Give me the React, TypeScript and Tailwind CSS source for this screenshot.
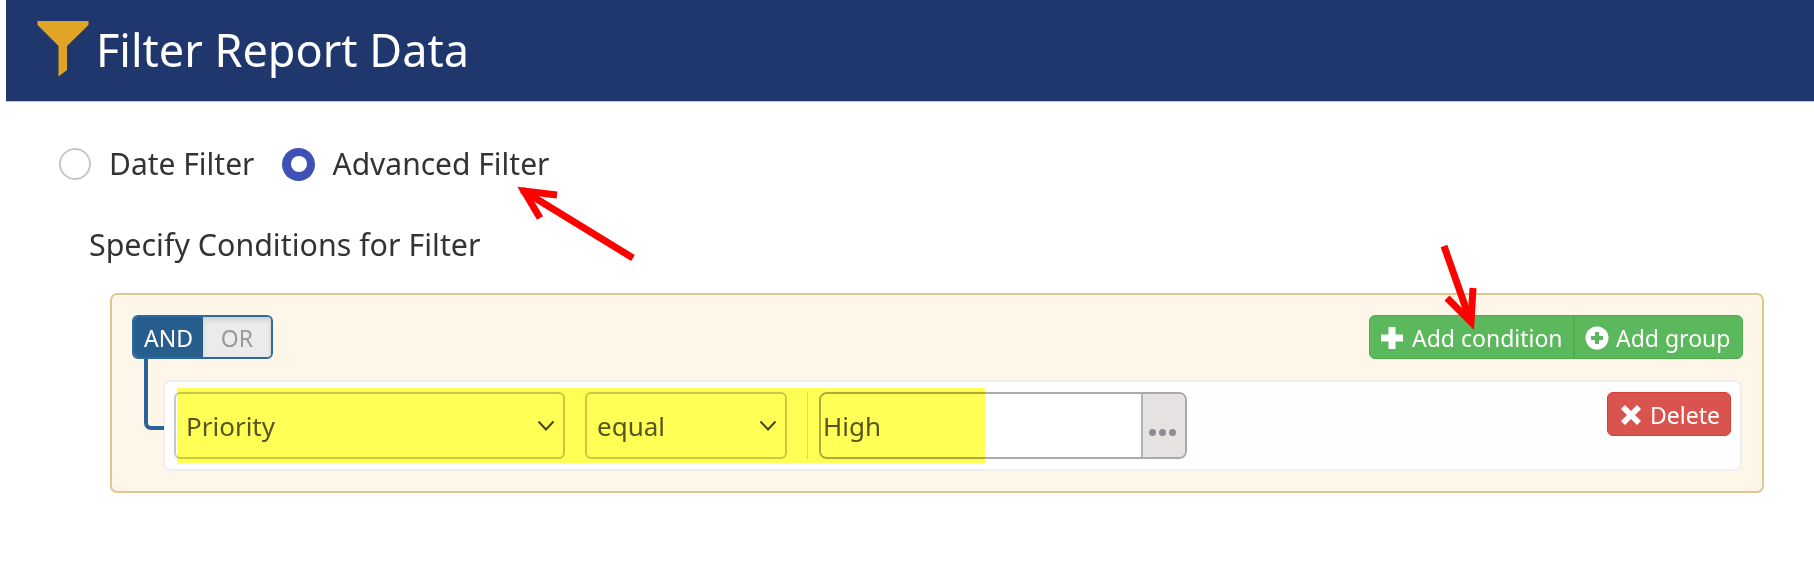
const sans = "font-['Noto_Sans',sans-serif]";

function ChevronDown() {
  return (
    <svg width="18" height="12" viewBox="0 0 18 12" fill="none" className="absolute right-[8px] top-[26px]">
      <path d="M1.5 1.5 9 9.500l7.500-8" stroke="#444" strokeWidth="2" />
    </svg>
  );
}

function PlusIcon() {
  return (
    <svg width="24" height="24" viewBox="0 0 24 24" className="mr-[8px] shrink-0">
      <path d="M8.500 1h7v7.500H23v7h-7.500V23h-7v-7.500H1v-7h7.500z" fill="#fff" />
    </svg>
  );
}

function PlusCircleIcon() {
  return (
    <svg width="24" height="24" viewBox="0 0 24 24" className="mr-[7px] shrink-0">
      <circle cx="12" cy="12" r="11.500" fill="#fff" />
      <path d="M10 6h4v4h4v4h-4v4h-4v-4H6v-4h4z" fill="#5cb85c" />
    </svg>
  );
}

function RemoveIcon() {
  return (
    <svg width="22" height="22" viewBox="0 0 22 22" className="mr-[8px] shrink-0">
      <path d="M5 1l6 6 6-6 4 4-6 6 6 6-4 4-6-6-6 6-4-4 6-6-6-6z" fill="#fff" />
    </svg>
  );
}

function SelectBox({ label, className }: { label: string; className: string }) {
  return (
    <div className={`relative flex h-[67px] items-center rounded-[6px] border-2 border-[#c8c8c8] bg-white pl-[10px] pt-[2px] text-[26px] text-[#555] ${className}`}>
      {label}
      <ChevronDown />
    </div>
  );
}

export default function App() {
  return (
    <div className={`relative h-[572px] w-[1814px] overflow-hidden bg-white ${sans}`}>
      <header className="ml-[6px] flex h-[102px] items-center border-b border-[#b9c4d4] bg-[#20376e] pl-[31px]">
        <svg width="52" height="56" viewBox="0 0 52 56" className="mb-[5px] mt-[1px] shrink-0">
          <path d="M0.500 0h51v4L30 25v24l-8.500 6.500V25L0.500 4z" fill="#e0a526" />
        </svg>
        <h1 className="mb-[2px] ml-[7px] text-[45px] leading-none text-white">Filter Report Data</h1>
      </header>

      <div className="mt-[46px] flex h-[32px] items-center pl-[59px] text-[30px] text-[#333]">
        <span className="size-[32px] rounded-full border-2 border-[#c8c8c8] bg-white" />
        <span className="mb-[2px] ml-[18px]">Date Filter</span>
        <span className="ml-[28px] flex size-[33px] items-center justify-center rounded-full bg-[#3f51b5]">
          <span className="size-[16px] rounded-full bg-white" />
        </span>
        <span className="mb-[2px] ml-[17px]">Advanced Filter</span>
      </div>

      <p className="ml-[89px] mt-[45px] text-[30.4px] leading-[40px] text-[#333]">Specify Conditions for Filter</p>

      <section className="relative ml-[110px] mt-[28px] h-[200px] w-[1654px] rounded-[7px] border-2 border-[#dfc890] bg-[#fdf6e9] pl-[20px] pr-[19px] pt-[20px]">
        <div className="flex items-start justify-between">
          <div className="flex h-[44px] w-[141px] overflow-hidden rounded-[6px] border-2 border-[#2a6a9e] text-[23px]">
            <span className="flex w-[69px] items-center justify-center bg-[#285e8e] pt-[2px] text-white">AND</span>
            <span className="flex flex-1 items-center justify-center bg-[#ebebeb] pt-[2px] text-[#999] shadow-[inset_0_3px_5px_rgba(0,0,0,0.125)]">OR</span>
          </div>
          <div className="flex h-[44px] w-[374px] overflow-hidden rounded-[6px] border border-[#4cae4c] bg-[#5cb85c] text-[23px] text-white">
            <span className="flex w-[205px] items-center border-r-2 border-[#4cae4c] pl-[10px] pt-[2px]">
              <PlusIcon />
              Add condition
            </span>
            <span className="flex flex-1 items-center pl-[10px] pt-[2px]">
              <PlusCircleIcon />
              Add group
            </span>
          </div>
        </div>

        <div className="relative ml-[31px] mt-[21px] flex h-[91px] w-[1579px] items-start rounded-[7px] border-2 border-[#eee] bg-[#fefefe] pl-[9px] pr-[9px] pt-[10px]">
          <SelectBox label="Priority" className="w-[391px]" />
          <SelectBox label="equal" className="ml-[20px] w-[202px]" />
          <span className="ml-[20px] h-[67px] w-px bg-[#ddd]" />
          <div className="ml-[11px] flex h-[67px] w-[368px] overflow-hidden rounded-[8px] border-2 border-[#aaa] text-[26px] text-[#555]">
            <span className="flex flex-1 items-center bg-white pl-[2px] pt-[2px]">High</span>
            <span className="flex w-[44px] items-center justify-center gap-[3px] border-l-2 border-[#b5b5b5] bg-[#e6e2e1] pr-[3px] pt-[13px]">
              <span className="size-[7px] rounded-full bg-[#8a8e94]" />
              <span className="size-[7px] rounded-full bg-[#8a8e94]" />
              <span className="size-[7px] rounded-full bg-[#8a8e94]" />
            </span>
          </div>
          <div className="ml-auto flex h-[44px] w-[124px] items-center rounded-[6px] border border-[#d43f3a] bg-[#d9534f] pl-[12px] pt-[2px] text-[23px] text-white">
            <RemoveIcon />
            Delete
          </div>
        </div>

        {/* tree line from the AND/OR toggle down to the first rule */}
        <div className="absolute left-[32px] top-[64px] h-[71px] w-[20px] rounded-bl-[7px] border-b-4 border-l-4 border-[#2a6496]" />
      </section>

      {/* marker highlight painted over the screenshot */}
      <div className="absolute left-[177px] top-[388px] h-[75px] w-[808px] bg-[#ffff55] mix-blend-multiply" />

      {/* annotation arrows */}
      <svg width="1814" height="572" viewBox="0 0 1814 572" fill="none" className="absolute inset-0">
        <g stroke="#ff0000" strokeWidth="7">
          <path d="M633 258 522 190" />
          <path d="M557 195 524 191 540 218" />
          <path d="M1444 246 1470 320" />
          <path d="M1473 288 1471 322 1447 298" />
        </g>
      </svg>
    </div>
  );
}
